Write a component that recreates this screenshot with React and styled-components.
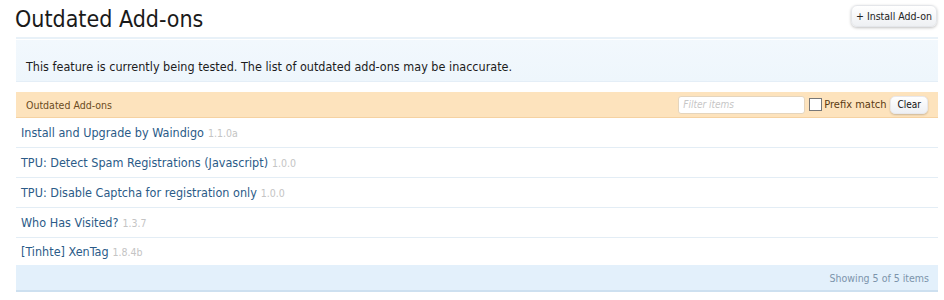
import React from "react";
import styled, { createGlobalStyle } from "styled-components";

const Global = createGlobalStyle`
  html, body { margin: 0; padding: 0; background: #fff; }
  body { font-family: "DejaVu Sans Condensed", "DejaVu Sans", sans-serif; color: #141414; }
`;

const Page = styled.div`
  padding: 0 6px 0 16px;
  width: 922px;
`;

const TitleBar = styled.div`
  display: flex;
  align-items: flex-start;
  justify-content: space-between;
  height: 37px;
  border-bottom: 2px solid #e8f1f8;
`;

const Title = styled.h1`
  margin: 5px 0 0 -1px;
  font-size: 23px;
  font-weight: normal;
  line-height: 28px;
  color: #1a1a1a;
`;

const TopButton = styled.button`
  margin-top: 5px;
  margin-right: 1px;
  height: 22px;
  padding: 0 4px;
  border: 1px solid #e4e6ea;
  border-radius: 6px;
  background: linear-gradient(#ffffff, #eef0f3);
  box-shadow: 0 1px 3px rgba(0,0,0,0.25);
  font-family: inherit;
  font-size: 10.5px;
  color: #222;
`;

const Info = styled.div`
  margin-top: 1px;
  height: 42px;
  box-sizing: border-box;
  padding: 19px 10px 0;
  background: linear-gradient(#f2f8fd, #eef6fc);
  border-bottom: 1px solid #e4eef7;
  font-size: 12.5px;
  line-height: 15px;
  color: #1c1c1c;
`;

const Section = styled.div`
  margin-top: 10px;
`;

const SectionHead = styled.div`
  height: 25px;
  display: flex;
  align-items: center;
  justify-content: space-between;
  padding: 0 10px 0 10px;
  background: #fde3bd;
  border-bottom: 1px solid #f5d2a2;
  font-size: 10.5px;
  color: #6b4b22;
`;

const Filters = styled.div`
  display: flex;
  align-items: center;
`;

const FilterInput = styled.input`
  width: 127px;
  height: 18px;
  box-sizing: border-box;
  padding: 0 4px;
  border: 1px solid #e5d5bd;
  border-radius: 3px;
  background: #fff;
  font-family: inherit;
  font-size: 10px;
  font-style: italic;
  color: #999;
  &::placeholder { color: #c6c6c6; }
`;

const Check = styled.span`
  width: 13px;
  height: 13px;
  margin-left: 4px;
  border: 1px solid #777;
  background: #fff;
  box-sizing: border-box;
`;

const CheckLabel = styled.span`
  margin-left: 2px;
  font-size: 11px;
  color: #5a3a12;
`;

const SmallButton = styled.button`
  margin-left: 4px;
  height: 18px;
  padding: 0 6px;
  border: 1px solid #e8e8ec;
  border-radius: 5px;
  background: linear-gradient(#ffffff, #eef0f4);
  box-shadow: 0 1px 2px rgba(0,0,0,0.2);
  font-family: inherit;
  font-size: 10px;
  color: #111;
`;

const Row = styled.div`
  height: 29px;
  display: flex;
  align-items: center;
  padding: 0 5px;
  border-bottom: 1px solid #e3edf5;
  font-size: 12.5px;
  color: #2b5b88;
  &:last-child { border-bottom: none; height: 27px; }
`;

const Version = styled.span`
  margin-left: 4px;
  font-size: 10.5px;
  color: #c4c4c4;
`;

const Footer = styled.div`
  height: 25px;
  display: flex;
  align-items: center;
  justify-content: flex-end;
  padding: 0 9px;
  background: #e3f0fb;
  border-bottom: 2px solid #cde0f0;
  font-size: 10.5px;
  color: #7c94ab;
`;

const addons = [
  ["Install and Upgrade by Waindigo", "1.1.0a"],
  ["TPU: Detect Spam Registrations (Javascript)", "1.0.0"],
  ["TPU: Disable Captcha for registration only", "1.0.0"],
  ["Who Has Visited?", "1.3.7"],
  ["[Tinhte] XenTag", "1.8.4b"],
];

export default function App() {
  return (
    <Page>
      <Global />
      <TitleBar>
        <Title>Outdated Add-ons</Title>
        <TopButton>+ Install Add-on</TopButton>
      </TitleBar>
      <Info>This feature is currently being tested. The list of outdated add-ons may be inaccurate.</Info>
      <Section>
        <SectionHead>
          <span>Outdated Add-ons</span>
          <Filters>
            <FilterInput placeholder="Filter items" />
            <Check />
            <CheckLabel>Prefix match</CheckLabel>
            <SmallButton>Clear</SmallButton>
          </Filters>
        </SectionHead>
        <div>
          {addons.map(([name, v]) => (
            <Row key={name}>
              {name}
              <Version>{v}</Version>
            </Row>
          ))}
        </div>
        <Footer>Showing 5 of 5 items</Footer>
      </Section>
    </Page>
  );
}
